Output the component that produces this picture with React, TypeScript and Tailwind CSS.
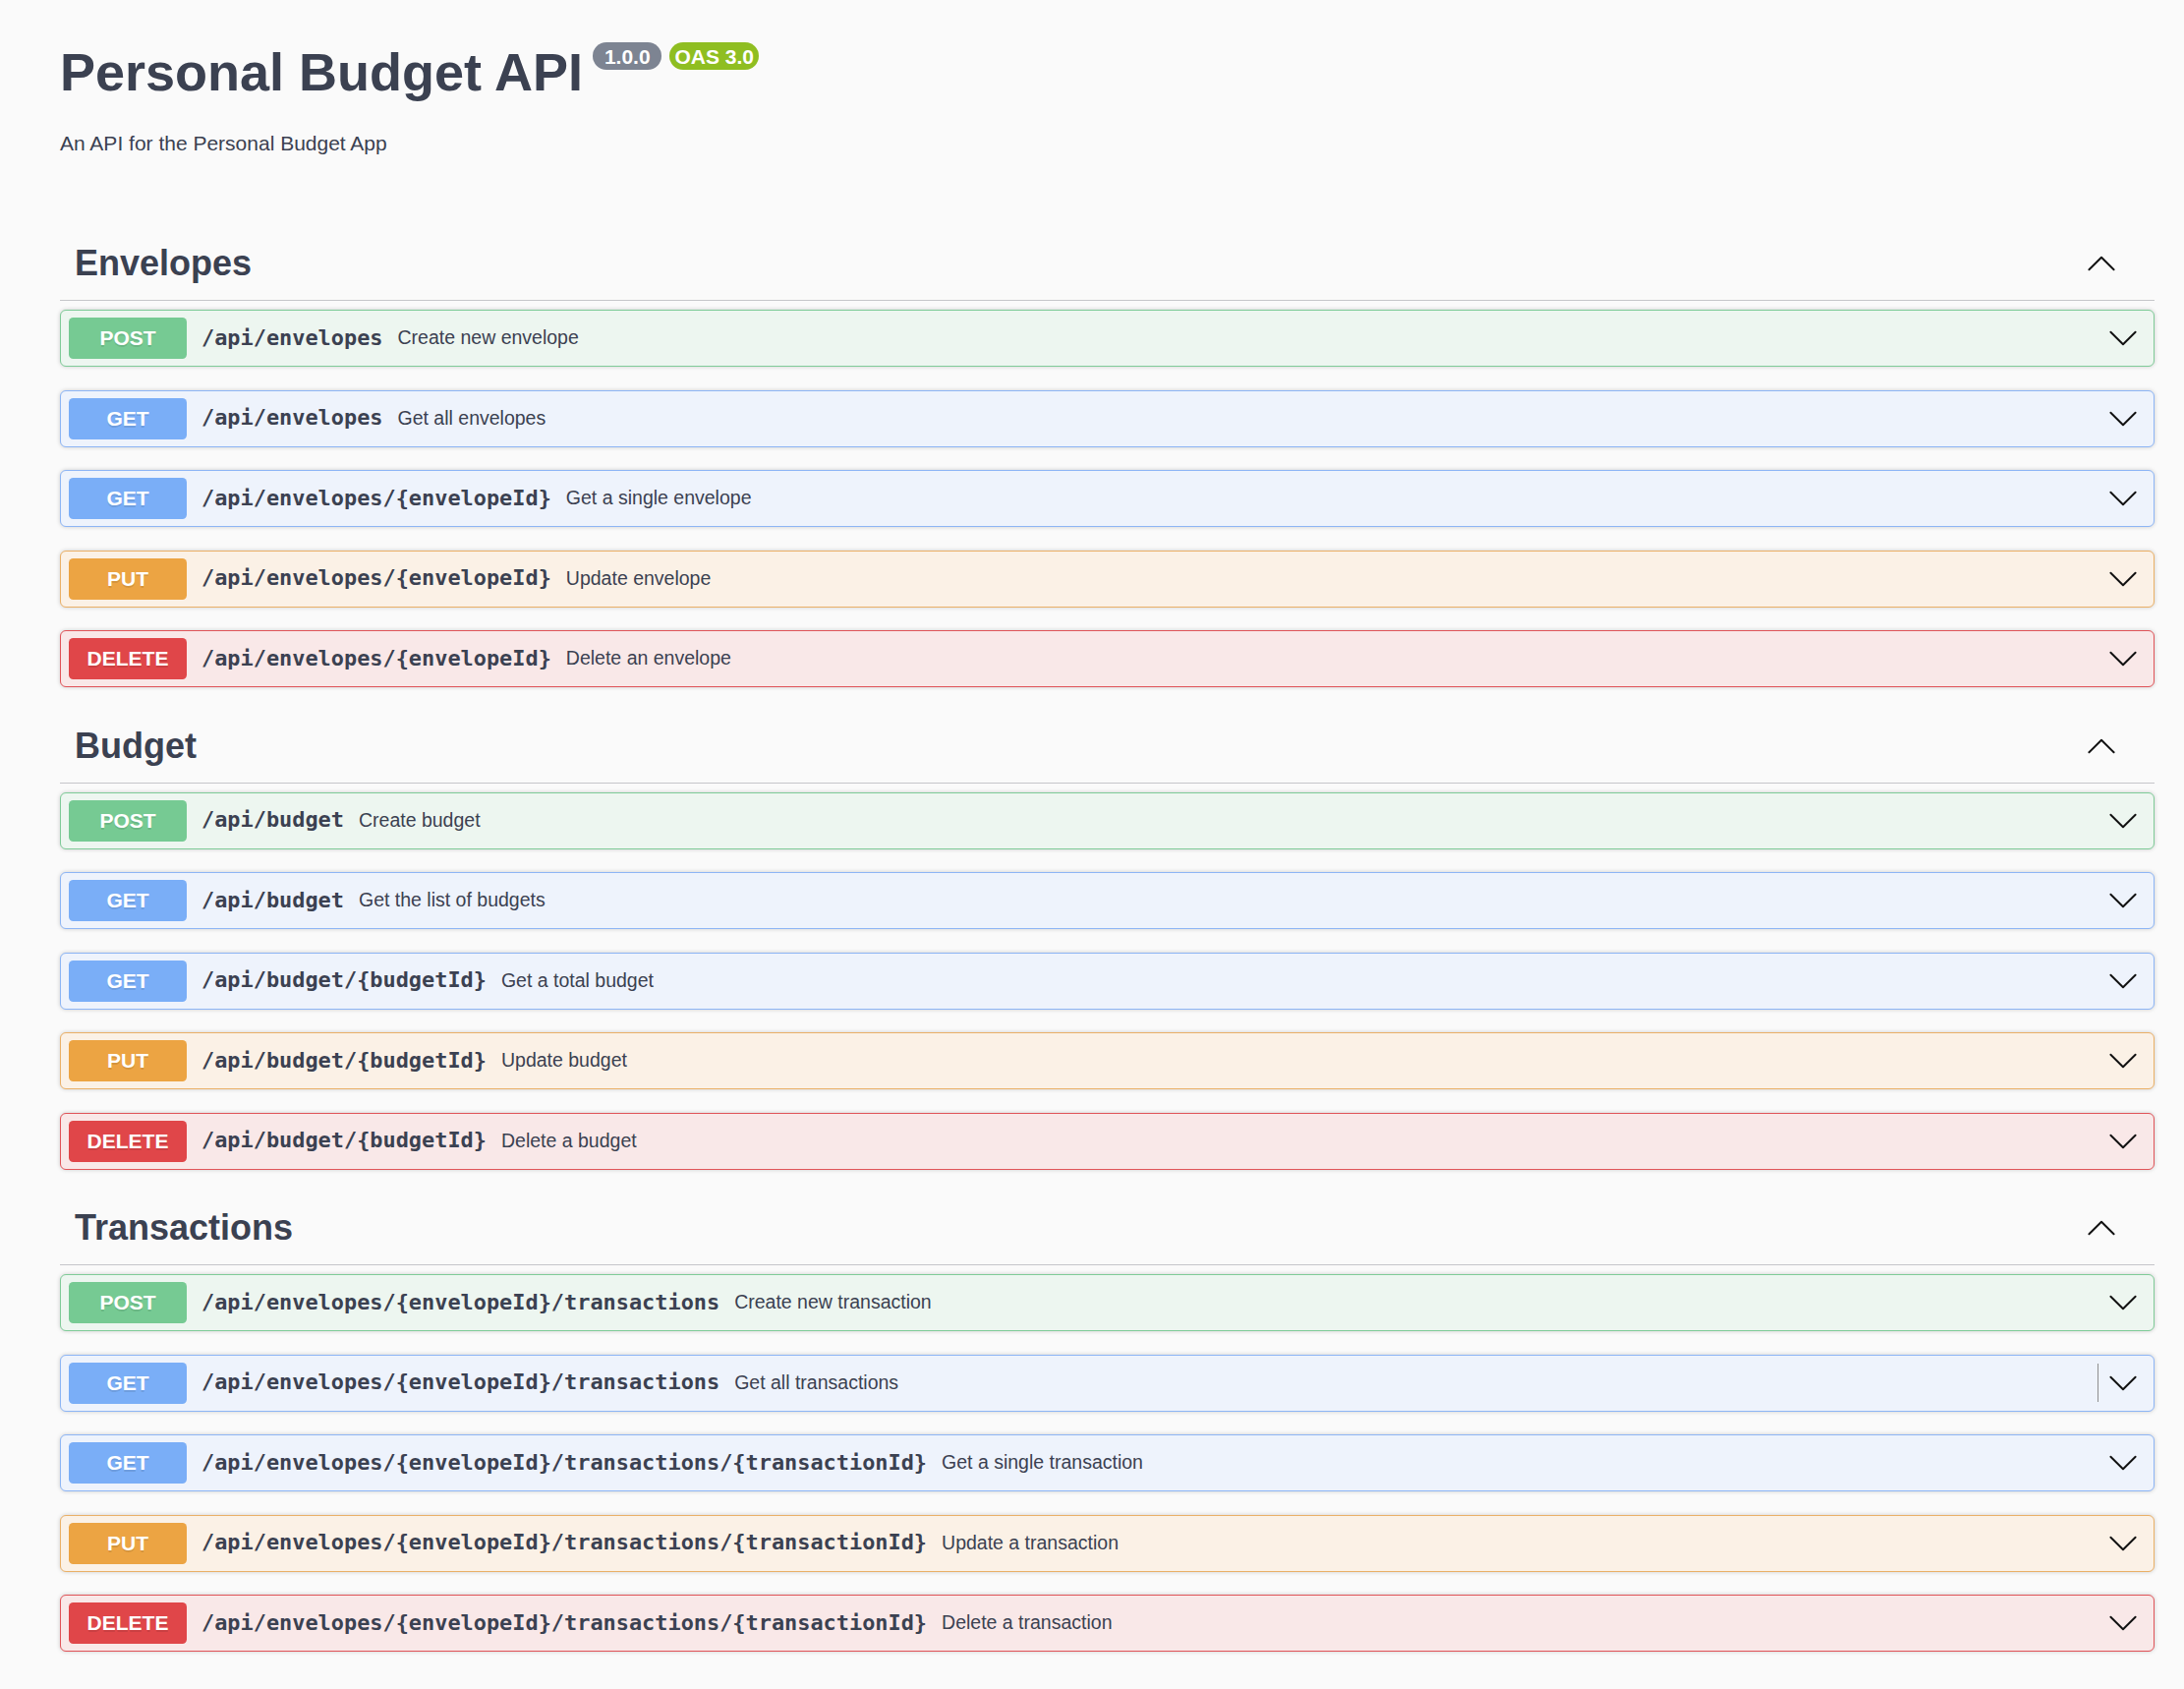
import React from "react";

type Method = "POST" | "GET" | "PUT" | "DELETE";

interface Operation {
  method: Method;
  path: string;
  summary: string;
  divider?: boolean;
}

interface Tag {
  name: string;
  ops: Operation[];
}

const methodStyles: Record<Method, { row: string; badge: string }> = {
  POST: { row: "bg-[#edf6f0] border-[#7fcb98]", badge: "bg-[#76ca93]" },
  GET: { row: "bg-[#eef3fc] border-[#8db5f5]", badge: "bg-[#7aaef7]" },
  PUT: { row: "bg-[#fbf1e6] border-[#eab067]", badge: "bg-[#eca443]" },
  DELETE: { row: "bg-[#f9e8e8] border-[#e05459]", badge: "bg-[#e04649]" },
};

const tags: Tag[] = [
  {
    name: "Envelopes",
    ops: [
      { method: "POST", path: "/api/envelopes", summary: "Create new envelope" },
      { method: "GET", path: "/api/envelopes", summary: "Get all envelopes" },
      { method: "GET", path: "/api/envelopes/{envelopeId}", summary: "Get a single envelope" },
      { method: "PUT", path: "/api/envelopes/{envelopeId}", summary: "Update envelope" },
      { method: "DELETE", path: "/api/envelopes/{envelopeId}", summary: "Delete an envelope" },
    ],
  },
  {
    name: "Budget",
    ops: [
      { method: "POST", path: "/api/budget", summary: "Create budget" },
      { method: "GET", path: "/api/budget", summary: "Get the list of budgets" },
      { method: "GET", path: "/api/budget/{budgetId}", summary: "Get a total budget" },
      { method: "PUT", path: "/api/budget/{budgetId}", summary: "Update budget" },
      { method: "DELETE", path: "/api/budget/{budgetId}", summary: "Delete a budget" },
    ],
  },
  {
    name: "Transactions",
    ops: [
      { method: "POST", path: "/api/envelopes/{envelopeId}/transactions", summary: "Create new transaction" },
      { method: "GET", path: "/api/envelopes/{envelopeId}/transactions", summary: "Get all transactions", divider: true },
      {
        method: "GET",
        path: "/api/envelopes/{envelopeId}/transactions/{transactionId}",
        summary: "Get a single transaction",
      },
      {
        method: "PUT",
        path: "/api/envelopes/{envelopeId}/transactions/{transactionId}",
        summary: "Update a transaction",
      },
      {
        method: "DELETE",
        path: "/api/envelopes/{envelopeId}/transactions/{transactionId}",
        summary: "Delete a transaction",
      },
    ],
  },
];

function Chevron({ up = false }: { up?: boolean }) {
  return (
    <svg width="30" height="30" viewBox="0 0 20 20" fill="none" className="shrink-0">
      <polyline
        points={up ? "1.6,14.2 10,5.8 18.4,14.2" : "1.6,5.8 10,14.2 18.4,5.8"}
        stroke="#111"
        strokeWidth="1.3"
        strokeLinecap="round"
        strokeLinejoin="round"
      />
    </svg>
  );
}

function OperationRow({ op }: { op: Operation }) {
  const s = methodStyles[op.method];
  return (
    <div
      className={`flex items-center h-[58px] box-border border rounded-[6px] pl-[8px] pr-[16px] shadow-[0_0_4px_rgba(0,0,0,0.19)] ${s.row}`}
    >
      <div
        className={`w-[120px] h-[42px] shrink-0 rounded-[4.5px] flex items-center justify-center text-white font-bold text-[21px] [text-shadow:0_1.5px_0_rgba(0,0,0,0.1)] ${s.badge}`}
      >
        {op.method}
      </div>
      <span className="px-[15px] font-['DejaVu_Sans_Mono',monospace] font-bold text-[21.9px] text-[#3b4151] whitespace-nowrap">
        {op.path}
      </span>
      <span className="flex-1 text-[19.5px] text-[#3b4151] whitespace-nowrap">{op.summary}</span>
      {op.divider && <div className="w-[1.5px] h-[39px] bg-[#8f8f8f] mr-[10px]" />}
      <Chevron />
    </div>
  );
}

function TagSection({ tag }: { tag: Tag }) {
  return (
    <section className="flex flex-col mb-[22.5px]">
      <div className="flex items-center h-[75px] box-border border-b border-[#c5c6ca] pl-[15px] pr-[39px]">
        <h3 className="flex-1 text-[36px] font-bold text-[#3b4151] leading-[44px]">{tag.name}</h3>
        <Chevron up />
      </div>
      <div className="flex flex-col gap-[23.5px] mt-[9px]">
        {tag.ops.map((op, i) => (
          <OperationRow key={i} op={op} />
        ))}
      </div>
    </section>
  );
}

export default function App() {
  return (
    <div className="min-h-screen bg-[#fafafa] font-['Liberation_Sans',Arial,sans-serif] text-[#3b4151]">
      <div className="pl-[61px] pr-[30px] pt-[42px]">
        <div className="flex items-start">
          <h2 className="text-[54px] font-bold leading-[62px] text-[#3b4151]">Personal Budget API</h2>
          <span className="ml-[10px] mt-[1px] h-[28px] px-[6px] rounded-full bg-[#7d8492] text-white font-bold text-[21px] leading-none flex items-center whitespace-pre">
            {" 1.0.0 "}
          </span>
          <span className="ml-[8px] mt-[1px] h-[28px] px-[5px] rounded-full bg-[#8fbe21] text-white font-bold text-[21px] leading-none flex items-center">
            OAS 3.0
          </span>
        </div>
        <p className="mt-[30px] text-[21px] leading-[24px] text-[#3b4151]">An API for the Personal Budget App</p>
        <div className="mt-[73px]">
          {tags.map((t) => (
            <TagSection key={t.name} tag={t} />
          ))}
        </div>
      </div>
    </div>
  );
}
